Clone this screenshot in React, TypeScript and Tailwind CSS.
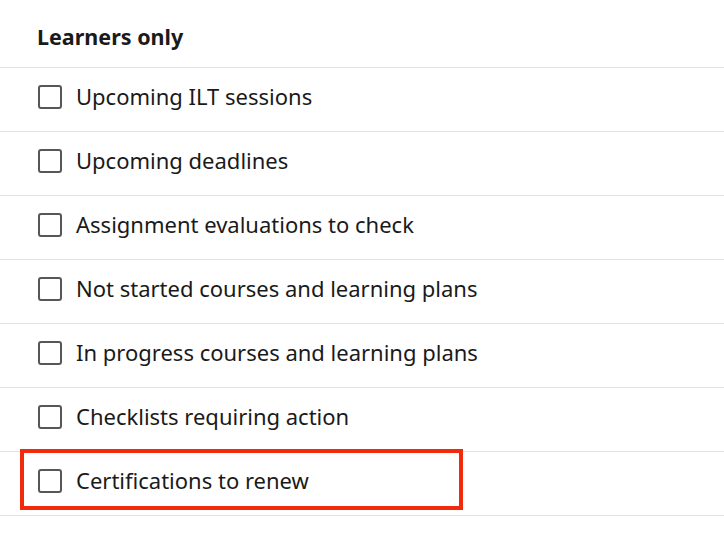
const items = [
  "Upcoming ILT sessions",
  "Upcoming deadlines",
  "Assignment evaluations to check",
  "Not started courses and learning plans",
  "In progress courses and learning plans",
  "Checklists requiring action",
  "Certifications to renew",
];

export default function App() {
  return (
    <div className="w-[724px] h-[540px] bg-white font-['Noto_Sans',sans-serif] text-[#1a1a1a] overflow-hidden">
      <div className="h-[68px] border-b border-[#e3e3e3] flex items-center pl-[37px] pt-[8px]">
        <h2 className="text-[21.5px] font-bold">Learners only</h2>
      </div>
      {items.map((label, i) => (
        <div key={label} className="relative h-16 border-b border-[#e3e3e3] flex items-center pl-[38px] pb-[6px] gap-[14px]">
          <span className="w-[24px] h-[24px] border-[2.5px] border-[#575757] rounded-[3px] shrink-0" />
          <span className="text-[22px]">{label}</span>
          {i === items.length - 1 && (
            <div className="absolute left-[20px] top-[-3px] w-[443px] h-[61px] border-[4px] border-[#f22a0c]" />
          )}
        </div>
      ))}
    </div>
  );
}
